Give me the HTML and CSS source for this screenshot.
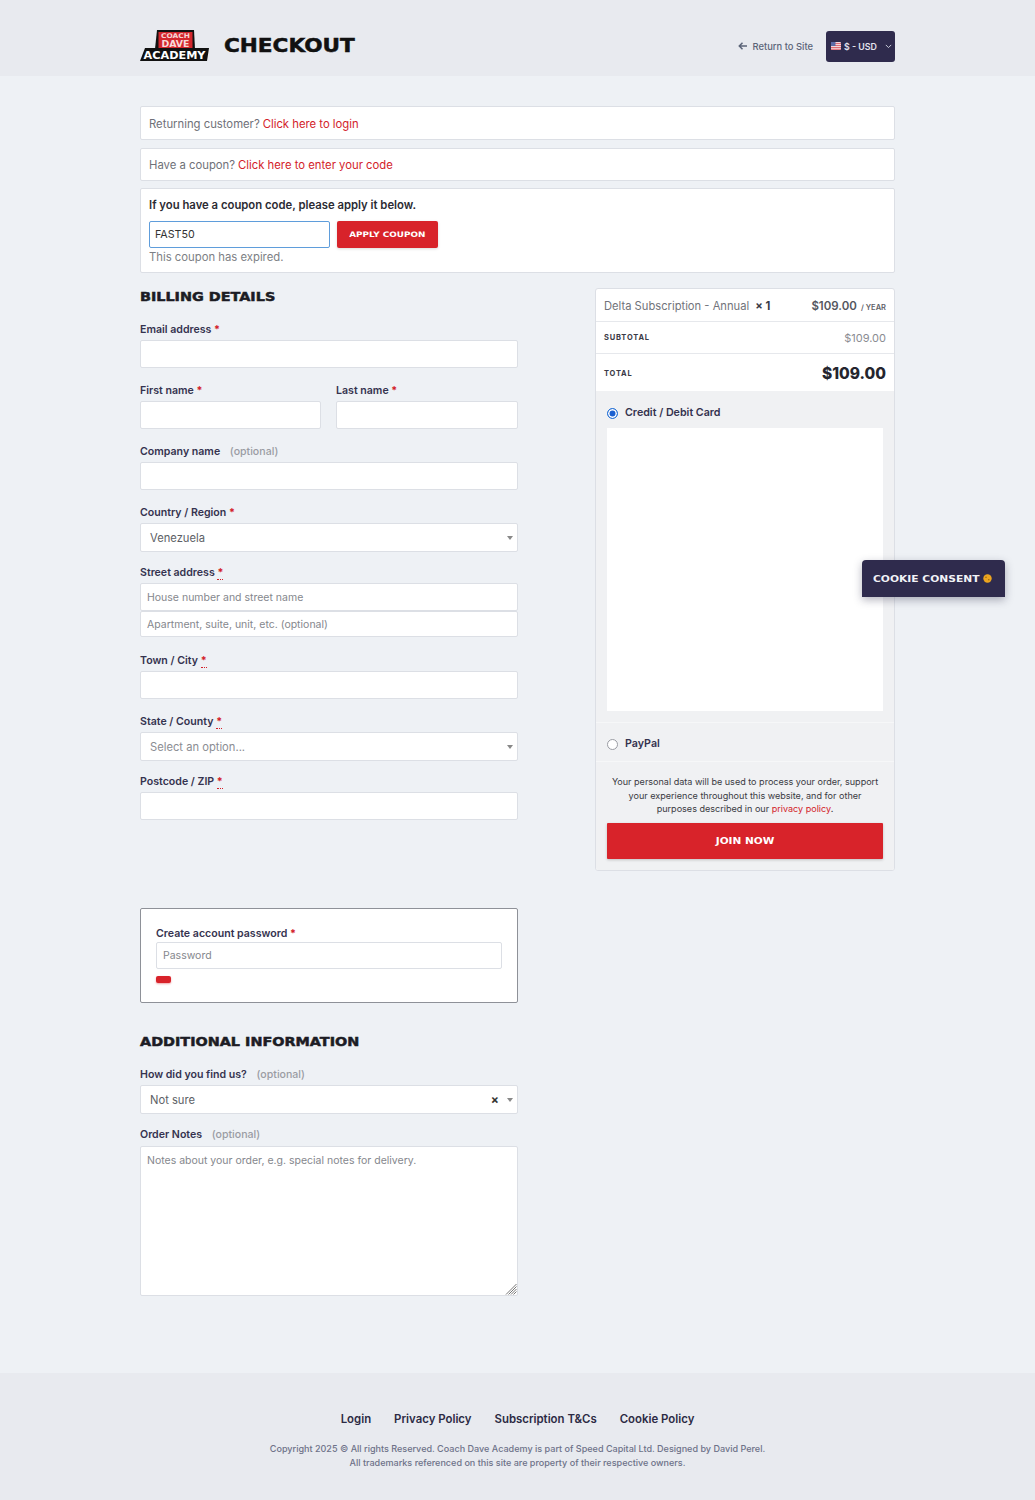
FILE: index.html
```html
<!DOCTYPE html>
<html lang="en">
<head>
<meta charset="utf-8">
<title>Checkout</title>
<link rel="stylesheet" href="styles.css">
</head>
<body>
<header class="topbar">
  <div class="wrap topbar-inner">
    <div class="brand">
      <svg class="logo" width="69" height="32" viewBox="0 0 69 32">
        <polygon points="17,0 54,0 55,19 15,19" fill="#111"/>
        <rect x="18.500" y="2" width="34" height="16" fill="#d3272d"/>
        <text x="35.500" y="8.300" class="logo-small" textLength="29" lengthAdjust="spacingAndGlyphs">COACH</text>
        <text x="35.500" y="16.800" class="logo-mid" textLength="28" lengthAdjust="spacingAndGlyphs">DAVE</text>
        <polygon points="5,18 69,18 67,31 0,31" fill="#111"/>
        <text x="34.500" y="28.800" class="logo-big" textLength="62" lengthAdjust="spacingAndGlyphs">ACADEMY</text>
      </svg>
      <h1 class="page-title"><span>CHECKOUT</span></h1>
    </div>
    <div class="top-actions">
      <a class="return-link">
        <svg width="10" height="10" viewBox="0 0 10 10"><path d="M9 5H1.500M4.500 1.800 1.300 5l3.200 3.200" fill="none" stroke="#5b6478" stroke-width="1.500"/></svg>
        Return to Site
      </a>
      <div class="currency">
        <svg class="flag" width="10" height="8" viewBox="0 0 10 8"><rect width="10" height="8" rx="1" fill="#f3d6da"/><path d="M0 1.500h10M0 3.500h10M0 5.500h10M0 7.300h10" stroke="#d9606b" stroke-width=".9"/><rect width="4.500" height="4" fill="#5a6aa5"/></svg>
        <span>$ - USD</span>
        <svg class="chev" width="7" height="5" viewBox="0 0 7 5"><path d="M.8.9 3.500 3.600 6.200.9" fill="none" stroke="#c9cbd8" stroke-width="1"/></svg>
      </div>
    </div>
  </div>
</header>

<main class="wrap main">
  <div class="notice notice-a">Returning customer? <a class="red">Click here to login</a></div>
  <div class="notice notice-b">Have a coupon? <a class="red">Click here to enter your code</a></div>
  <div class="coupon">
    <p class="coupon-title">If you have a coupon code, please apply it below.</p>
    <div class="coupon-row">
      <div class="coupon-input">FAST50</div>
      <div class="btn-coupon"><span>APPLY COUPON</span></div>
    </div>
    <p class="coupon-msg">This coupon has expired.</p>
  </div>

  <div class="columns">
    <section class="left">
      <h2 class="section-title billing"><span>BILLING DETAILS</span></h2>

      <div class="field">
        <label class="lbl">Email address <b class="req">*</b></label>
        <div class="input"></div>
      </div>
      <div class="field two">
        <div class="cell-a">
          <label class="lbl">First name <b class="req">*</b></label>
          <div class="input"></div>
        </div>
        <div class="cell-b">
          <label class="lbl">Last name <b class="req">*</b></label>
          <div class="input"></div>
        </div>
      </div>
      <div class="field">
        <label class="lbl">Company name <span class="opt">(optional)</span></label>
        <div class="input"></div>
      </div>
      <div class="field field-tight">
        <label class="lbl">Country / Region <b class="req">*</b></label>
        <div class="select"><span>Venezuela</span><i class="caret"></i></div>
      </div>
      <div class="field field-street">
        <label class="lbl">Street address <abbr class="req">*</abbr></label>
        <div class="input ph street-1">House number and street name</div>
        <div class="input ph street-2">Apartment, suite, unit, etc. (optional)</div>
      </div>
      <div class="field">
        <label class="lbl">Town / City <abbr class="req">*</abbr></label>
        <div class="input"></div>
      </div>
      <div class="field field-tight">
        <label class="lbl">State / County <abbr class="req">*</abbr></label>
        <div class="select muted"><span>Select an option...</span><i class="caret"></i></div>
      </div>
      <div class="field field-post">
        <label class="lbl">Postcode / ZIP <abbr class="req">*</abbr></label>
        <div class="input"></div>
      </div>

      <div class="password-box">
        <label class="lbl">Create account password <b class="req">*</b></label>
        <div class="input ph pw">Password</div>
        <div class="meter"></div>
      </div>

      <h2 class="section-title additional"><span>ADDITIONAL INFORMATION</span></h2>
      <div class="field field-tight">
        <label class="lbl">How did you find us? <span class="opt">(optional)</span></label>
        <div class="select"><span>Not sure</span><em class="clear">×</em><i class="caret"></i></div>
      </div>
      <div class="field field-notes">
        <label class="lbl">Order Notes <span class="opt">(optional)</span></label>
        <div class="textarea ph">Notes about your order, e.g. special notes for delivery.
          <svg class="grip" width="12" height="12" viewBox="0 0 12 12"><path d="M11.500 1 1 11.500M11.500 3.500 3.500 11.500M11.500 6 6 11.500M11.500 8.500 8.500 11.500" stroke="#777" stroke-width="1"/></svg>
        </div>
      </div>
    </section>

    <aside class="order">
      <div class="row row-item">
        <span class="item-name">Delta Subscription - Annual <b class="qty">× 1</b></span>
        <span class="item-price"><b>$109.00</b> <small>/ YEAR</small></span>
      </div>
      <div class="row row-sub">
        <span class="row-label">SUBTOTAL</span>
        <span class="sub-price">$109.00</span>
      </div>
      <div class="row row-total">
        <span class="row-label">TOTAL</span>
        <strong class="total-price">$109.00</strong>
      </div>
      <div class="payment">
        <div class="pay-method">
          <label class="pay-label"><span class="radio on"></span>Credit / Debit Card</label>
          <div class="card-frame"></div>
        </div>
        <div class="pay-method pay-paypal">
          <label class="pay-label"><span class="radio"></span>PayPal</label>
        </div>
        <div class="place">
          <p class="privacy">Your personal data will be used to process your order, support your experience throughout this website, and for other purposes described in our <a class="red">privacy policy</a>.</p>
          <div class="btn-join"><span>JOIN NOW</span></div>
        </div>
      </div>
    </aside>
  </div>
</main>

<footer class="footer">
  <nav class="foot-nav">
    <a>Login</a><a>Privacy Policy</a><a>Subscription T&amp;Cs</a><a>Cookie Policy</a>
  </nav>
  <p class="copy">Copyright 2025 © All rights Reserved. Coach Dave Academy is part of Speed Capital Ltd. Designed by David Perel.<br>All trademarks referenced on this site are property of their respective owners.</p>
</footer>

<div class="cookie"><span class="cookie-text">COOKIE CONSENT</span><svg width="9" height="9" viewBox="0 0 9 9"><circle cx="4.500" cy="4.500" r="4.200" fill="#eda51f"/><circle cx="3" cy="3.200" r=".8" fill="#9c6a12"/><circle cx="5.800" cy="5.800" r=".8" fill="#9c6a12"/></svg></div>
</body>
</html>
```
FILE: styles.css
```css
* { box-sizing: border-box; }
html, body { margin: 0; padding: 0; }
body {
  position: relative;
  height: 1500px;
  overflow: hidden;
  background: #eef1f5;
  font-family: Inter, "Noto Sans", sans-serif;
  color: #2f2d4a;
}
p, h1, h2 { margin: 0; }
.wrap { width: 755px; margin-left: 140px; }
.topbar { height: 76px; background: #e8eaef; }
.topbar-inner { display: flex; justify-content: space-between; align-items: center; height: 76px; padding-top: 16px; }
.brand { display: flex; align-items: center; gap: 15px; }
.logo { display: block; margin-top: 0; }
.logo text { font-family: "DejaVu Sans", sans-serif; font-weight: 700; text-anchor: middle; }
.logo-small { font-size: 6.500px; fill: #f7d5d5; }
.logo-mid { font-size: 8px; fill: #f8dada; }
.logo-big { font-size: 10.200px; fill: #fff; }
.page-title { font-family: "DejaVu Sans", sans-serif; font-size: 19px; font-weight: 700; color: #111; line-height: 24px; width: 132px; white-space: nowrap; margin-top: -2px; }
.page-title span { display: inline-block; transform: scaleX(1.135); transform-origin: left; -webkit-text-stroke: .5px #111; }
.top-actions { display: flex; align-items: center; gap: 13px; }
.return-link { display: flex; align-items: center; gap: 5px; font-size: 9.400px; font-weight: 500; color: #5b6478; }
.currency { width: 69px; height: 31px; background: #2f2b4d; border-radius: 3px; display: flex; align-items: center; padding: 0 3px 0 5px; color: #e4e4ee; font-size: 8.800px; font-weight: 600; }
.flag { margin-right: 3px; }
.chev { margin-left: auto; }

.main { padding-top: 30px; }
.red { color: #d3222a; }
.notice { background: #fff; border: 1px solid #dcdfe5; border-radius: 2px; padding: 0 8px; font-size: 11.300px; color: #6f7178; display: flex; align-items: center; gap: 3px; }
.notice-a { height: 34px; margin-bottom: 8px; padding-top: 1px; }
.notice-b { height: 33px; margin-bottom: 7px; }
.coupon { height: 85px; background: #fff; border: 1px solid #dcdfe5; border-radius: 2px; padding: 9px 8px 0; }
.coupon-title { font-size: 11.300px; font-weight: 600; color: #2b2b33; line-height: 15px; }
.coupon-row { display: flex; gap: 7px; margin-top: 8px; }
.coupon-input { width: 181px; height: 27px; border: 1px solid #5f9ddb; border-radius: 2px; font-size: 10.700px; color: #333; display: flex; align-items: center; padding-left: 5px; }
.btn-coupon { width: 101px; height: 27px; background: #d8232a; border-radius: 2px; color: #fff; font-family: "DejaVu Sans", sans-serif; font-size: 7.500px; font-weight: 700; display: flex; align-items: center; justify-content: center; box-shadow: 0 1px 3px rgba(0,0,0,.15); }
.btn-coupon span { display: inline-block; transform: scaleX(1.18); white-space: nowrap; }
.coupon-msg { font-size: 11.300px; color: #7d7f85; line-height: 15px; margin-top: 2px; }

.columns { display: flex; justify-content: space-between; align-items: flex-start; margin-top: 15px; }
.left { width: 378px; }
.section-title { font-family: "DejaVu Sans", sans-serif; font-size: 12.500px; font-weight: 700; color: #1c1c24; line-height: 18px; -webkit-text-stroke: .5px #1c1c24; white-space: nowrap; }
.section-title span { display: inline-block; transform: scaleX(1.15); transform-origin: left; }
.billing { margin-bottom: 17px; }
.additional { margin: 30px 0 17px; }
.field { margin-bottom: 16px; }
.field-tight { margin-bottom: 14px; }
.lbl { display: block; font-size: 10.600px; font-weight: 600; color: #35334f; line-height: 14px; margin-bottom: 3px; }
.req { color: #d3222a; font-weight: 700; text-decoration: none; }
abbr.req { border-bottom: 1px dotted #d3222a; }
.opt { color: #9a9ca3; font-weight: 500; margin-left: 7px; }
.two { display: flex; gap: 15px; }
.cell-a { width: 181px; }
.cell-b { flex: 1; }
.input { height: 28px; background: #fff; border: 1px solid #dcdfe5; border-radius: 2px; }
.ph { color: #85878d; font-size: 10.500px; display: flex; align-items: center; padding-left: 6px; }
.field-street { margin-bottom: 17px; }
.street-1 { height: 28px; }
.street-2 { height: 26px; }
.select { position: relative; height: 29px; background: #fff; border: 1px solid #dcdfe5; border-radius: 2px; font-size: 11.200px; color: #5d5f66; display: flex; align-items: center; padding-left: 9px; }
.select.muted { color: #8b8d93; }
.field-post { margin-bottom: 88px; }
.caret { position: absolute; right: 4px; top: 12px; width: 0; height: 0; border-left: 3.500px solid transparent; border-right: 3.500px solid transparent; border-top: 4px solid #888; }
.clear { position: absolute; right: 18px; top: 6px; font-style: normal; font-weight: 700; font-size: 12px; line-height: 16px; color: #333; }
.password-box { height: 95px; background: #fff; border: 1px solid #8e9198; border-radius: 2px; padding: 18px 15px 0; }
.password-box .lbl { margin-bottom: 1px; }
.pw { height: 27px; }
.meter { width: 15px; height: 7px; margin-top: 7px; background: #d8232a; border-radius: 2px; box-shadow: 0 1px 2px rgba(216,35,42,.4); }
.field-notes .lbl { margin-bottom: 4px; }
.textarea { position: relative; height: 150px; background: #fff; border: 1px solid #dcdfe5; border-radius: 2px; padding-top: 6px; line-height: 15px; display: block; }
.grip { position: absolute; right: 0; bottom: 0; }

.order { width: 300px; background: #fff; border: 1px solid #dcdfe5; border-radius: 3px; overflow: hidden; }
.row { display: flex; justify-content: space-between; align-items: center; padding: 0 8px 0 8px; border-bottom: 1px solid #e6e8ec; }
.row-item { height: 33px; font-size: 11.200px; color: #71737a; padding-top: 1px; }
.qty { color: #3a3a46; margin-left: 3px; }
.item-price b { color: #54565e; font-weight: 600; font-size: 11.500px; }
.item-price small { font-size: 7.500px; font-weight: 600; color: #5e6068; margin-left: 1px; }
.row-sub { height: 32px; }
.row-label { font-size: 7.500px; font-weight: 700; letter-spacing: .8px; color: #3a3a46; }
.sub-price { font-size: 11px; color: #8a8c92; }
.row-total { height: 37px; border-bottom: 0; padding-top: 1px; }
.total-price { font-size: 15.500px; font-weight: 800; color: #25252e; }
.payment { background: #f0f1f3; padding: 0; height: 479px; }
.pay-method { padding: 15px 11px 11px; border-bottom: 1px solid #f6f7f8; }
.pay-label { display: flex; align-items: center; gap: 7px; font-size: 10.700px; font-weight: 600; color: #35334f; line-height: 14px; }
.radio { width: 11px; height: 11px; border: 1px solid #9a9ca3; border-radius: 50%; background: #fff; flex: none; margin-top: 1px; }
.radio.on { border: 1px solid #2a75d6; background: #1a5fd0; box-shadow: inset 0 0 0 1.500px #fff; }
.card-frame { height: 283px; background: #fff; margin-top: 8px; }
.pay-paypal { padding: 14px 11px 11px; height: 39px; }
.place { padding: 13px 11px 0; }
.privacy { font-size: 9.050px; line-height: 13.500px; text-align: center; color: #3a3a42; padding: 0 4px; }
.btn-join { height: 36px; margin-top: 7px; background: #d8232a; border-radius: 1px; color: #fff; font-family: "DejaVu Sans", sans-serif; font-weight: 700; font-size: 9px; display: flex; align-items: center; justify-content: center; box-shadow: 0 1px 3px rgba(0,0,0,.2); }
.btn-join span { display: inline-block; transform: scaleX(1.17); white-space: nowrap; }

.footer { position: absolute; left: 0; right: 0; top: 1373px; height: 127px; background: #e8eaef; padding-top: 38px; text-align: center; }
.foot-nav { display: flex; justify-content: center; gap: 23px; font-size: 11.400px; font-weight: 600; color: #2c2a44; line-height: 16px; }
.copy { font-size: 9.050px; font-weight: 500; line-height: 14.300px; color: #6e7289; margin-top: 15px; }

.cookie { position: absolute; left: 862px; top: 560px; width: 143px; height: 37px; background: #2f2b4d; border-radius: 4px 4px 0 0; display: flex; align-items: center; padding-left: 11px; box-shadow: 0 3px 8px rgba(40,40,70,.35); color: #f2f2f6; }
.cookie-text { display: block; width: 110px; font-family: "DejaVu Sans", sans-serif; font-size: 9.200px; font-weight: 700; white-space: nowrap; transform: scaleX(1.165); transform-origin: left; }
```
